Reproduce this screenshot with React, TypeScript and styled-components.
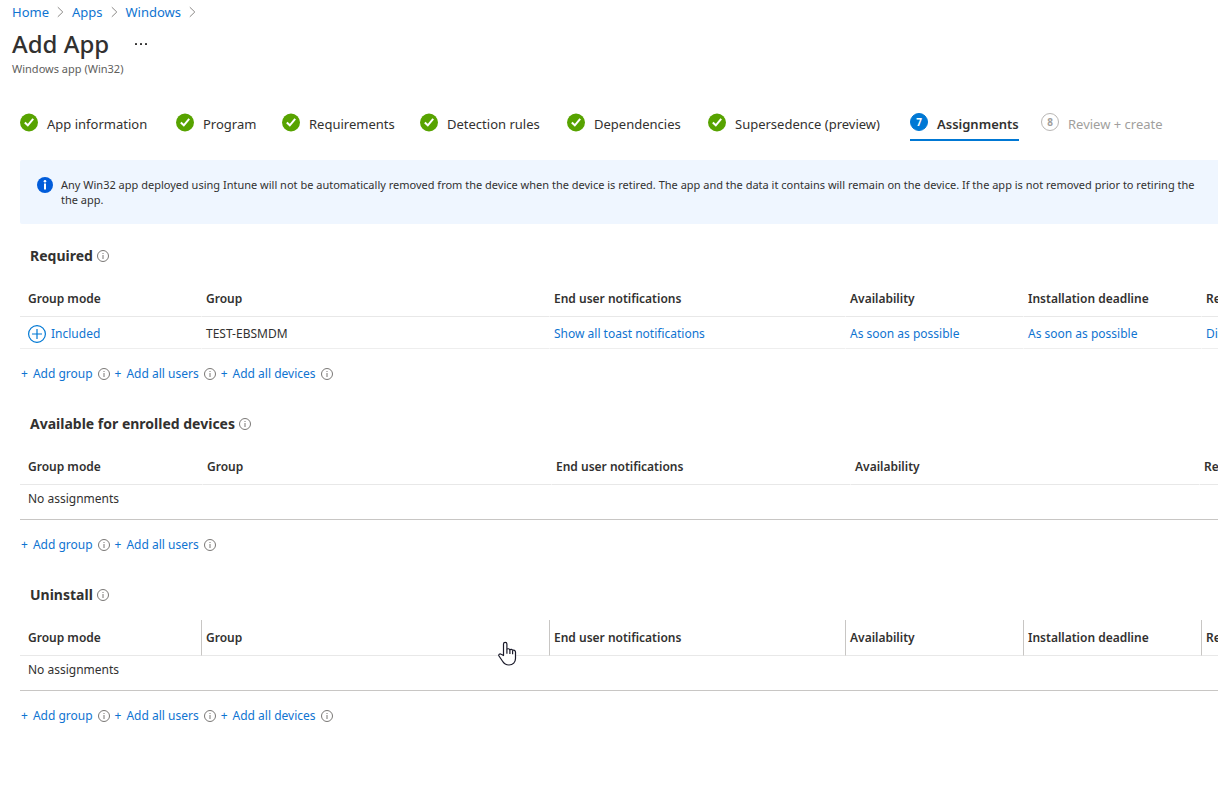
import React from "react";
import styled, { createGlobalStyle } from "styled-components";

const GlobalStyle = createGlobalStyle`
  *, *::before, *::after { box-sizing: border-box; }
  body {
    margin: 0;
    background: #fff;
    color: #323130;
    font-family: "Segoe UI", "Noto Sans", "Open Sans", sans-serif;
    font-size: 12px;
    line-height: 20px;
  }
`;

const BLUE = "#0f74d1";

const Page = styled.div`
  position: relative;
  min-height: 100vh;
  overflow: hidden;
  padding-top: 2px;
`;

const Breadcrumb = styled.nav`
  display: flex;
  align-items: center;
  gap: 8px;
  padding-left: 12px;
  font-size: 13px;
`;

const Link = styled.a`
  color: ${BLUE};
  text-decoration: none;
`;

const Header = styled.header`
  padding: 6px 12px 0;
`;

const TitleRow = styled.div`
  display: flex;
  align-items: center;
  gap: 24px;
`;

const Title = styled.h1`
  margin: 0;
  font-size: 24px;
  font-weight: 500;
  line-height: 32px;
`;

const MoreButton = styled.button`
  display: flex;
  padding: 2px;
  border: 0;
  background: none;
  color: #323130;
`;

const Subtitle = styled.p`
  margin: 0;
  font-size: 11px;
  line-height: 18px;
  color: #605e5c;
`;

const Steps = styled.ol`
  display: grid;
  grid-template-columns: 156px 106px 138px 147px 141px 202px 131px auto;
  justify-content: start;
  margin: 35px 0 0;
  padding: 0 0 0 20px;
  list-style: none;
  white-space: nowrap;
`;

const Step = styled.li<{ $state: "done" | "current" | "upcoming" }>`
  display: flex;
  justify-self: start;
  align-items: flex-start;
  gap: 9px;
  height: 28px;
  font-size: 13px;
  line-height: 22px;
  font-weight: ${(p) => (p.$state === "current" ? 600 : 400)};
  color: ${(p) => (p.$state === "upcoming" ? "#a19f9d" : "#323130")};
  border-bottom: 2px solid ${(p) => (p.$state === "current" ? "#0078d4" : "transparent")};
`;

const StepNumber = styled.span<{ $current: boolean }>`
  width: 18px;
  height: 18px;
  border-radius: 50%;
  border: 1px solid ${(p) => (p.$current ? "#0078d4" : "#b8b6b4")};
  background: ${(p) => (p.$current ? "#0078d4" : "#fff")};
  color: ${(p) => (p.$current ? "#fff" : "#a19f9d")};
  font-size: 10px;
  font-weight: 700;
  line-height: 16px;
  text-align: center;
`;

const Banner = styled.div`
  display: flex;
  align-items: flex-start;
  gap: 8px;
  height: 64px;
  margin: 19px 0 0 20px;
  padding: 17px 0 0 17px;
  border-radius: 2px 0 0 2px;
  background: #eff6ff;
`;

const BannerText = styled.p`
  margin: 0;
  font-size: 11px;
  line-height: 15px;
  white-space: nowrap;
`;

const Section = styled.section`
  padding-left: 20px;

  & + & { margin-top: 30px; }
  ${Banner} + & { margin-top: 22px; }
`;

const Heading = styled.h2`
  display: flex;
  align-items: center;
  gap: 4px;
  margin: 0 0 15px 10px;
  font-size: 14px;
  font-weight: 700;
  line-height: 20px;
`;

const Table = styled.table`
  width: 100%;
  min-width: 1360px;
  table-layout: fixed;
  border-collapse: separate;
  border-spacing: 0;
  text-align: left;
  white-space: nowrap;
`;

const Th = styled.th<{ $divided?: boolean }>`
  height: 36px;
  padding: 0 4px;
  border-left: 1px solid ${(p) => (p.$divided ? "#c8c6c4" : "transparent")};
  border-bottom: 1px solid #e8e8e8;
  font-weight: 600;

  &:first-child { padding-left: 8px; border-left: 0; }
`;

const Td = styled.td<{ $empty?: boolean }>`
  height: ${(p) => (p.$empty ? 35 : 32)}px;
  padding: ${(p) => (p.$empty ? "0 4px 7px" : "2px 4px 0")};
  border-left: 1px solid transparent;
  border-bottom: 1px solid ${(p) => (p.$empty ? "#c8c6c4" : "#eeeeee")};

  &:first-child { padding-left: 8px; border-left: 0; }
`;

const ModeLink = styled(Link)`
  display: flex;
  align-items: center;
  gap: 5px;
`;

const Actions = styled.div`
  display: flex;
  align-items: center;
  gap: 5px;
  margin-top: 15px;
  padding-left: 1px;
`;

const Action = styled.span`
  display: flex;
  align-items: center;
  gap: 5px;
`;

const AddButton = styled.button`
  display: flex;
  gap: 5px;
  padding: 0;
  border: 0;
  background: none;
  color: ${BLUE};
  font: inherit;
`;

const Pointer = styled.svg`
  position: absolute;
  left: 498px;
  top: 641px;
`;

const Chevron = () => (
  <svg width="7" height="12" viewBox="0 0 7 12" fill="none" stroke="#8a8886" aria-hidden="true">
    <path d="M0.8 1.2 5.8 6 0.8 10.8" />
  </svg>
);

const Check = () => (
  <svg width="18" height="19" viewBox="0 0 18 19" aria-hidden="true">
    <circle cx="9" cy="9.5" r="9" fill="#57a300" />
    <path d="M4.800 9.500 7.800 12.300 13.200 5.800" fill="none" stroke="#fff" strokeWidth="2" />
  </svg>
);

const Info = () => (
  <svg width="12" height="12" viewBox="0 0 12 12" aria-hidden="true">
    <circle cx="6" cy="6" r="5.5" fill="none" stroke="#797775" />
    <path d="M6 5v4M6 3v1" stroke="#797775" />
  </svg>
);

const InfoFilled = () => (
  <svg width="16" height="16" viewBox="0 0 16 16" aria-hidden="true">
    <circle cx="8" cy="8" r="8" fill="#015cda" />
    <path d="M8 6.6v6" stroke="#fff" strokeWidth="2" />
    <circle cx="8" cy="4.2" r="1.3" fill="#fff" />
  </svg>
);

const PlusCircle = () => (
  <svg width="18" height="18" viewBox="0 0 18 18" fill="none" stroke="#0078d4" aria-hidden="true">
    <circle cx="9" cy="9" r="8.4" strokeWidth="1.2" />
    <path d="M9 4v10M4 9h10" strokeWidth="1.2" />
  </svg>
);

const doneSteps = [
  "App information",
  "Program",
  "Requirements",
  "Detection rules",
  "Dependencies",
  "Supersedence (preview)",
];

type Column = { label: string; width?: number };

const fullColumns: Column[] = [
  { label: "Group mode", width: 181 },
  { label: "Group", width: 348 },
  { label: "End user notifications", width: 296 },
  { label: "Availability", width: 178 },
  { label: "Installation deadline", width: 178 },
  { label: "Restart grace period" },
];

const availableColumns: Column[] = [
  { label: "Group mode", width: 182 },
  { label: "Group", width: 349 },
  { label: "End user notifications", width: 299 },
  { label: "Availability", width: 349 },
  { label: "Restart grace period" },
];

type AssignmentsProps = {
  title: string;
  columns: Column[];
  actions: string[];
  divided?: boolean;
  children?: React.ReactNode;
};

const Assignments = ({ title, columns, actions, divided, children }: AssignmentsProps) => (
  <Section>
    <Heading>
      {title}
      <Info />
    </Heading>
    <Table aria-label={title}>
      <colgroup>
        {columns.map((c) => (
          <col key={c.label} width={c.width} />
        ))}
      </colgroup>
      <thead>
        <tr>
          {columns.map((c) => (
            <Th key={c.label} scope="col" $divided={divided}>
              {c.label}
            </Th>
          ))}
        </tr>
      </thead>
      <tbody>
        {children ?? (
          <tr>
            <Td $empty colSpan={columns.length}>
              No assignments
            </Td>
          </tr>
        )}
      </tbody>
    </Table>
    <Actions>
      {actions.map((a) => (
        <Action key={a}>
          <AddButton type="button">
            <span>+</span>
            <span>{a}</span>
          </AddButton>
          <Info />
        </Action>
      ))}
    </Actions>
  </Section>
);

export default function App() {
  return (
    <Page>
      <GlobalStyle />
      <Breadcrumb aria-label="Breadcrumb">
        {["Home", "Apps", "Windows"].map((name) => (
          <React.Fragment key={name}>
            <Link href="#">{name}</Link>
            <Chevron />
          </React.Fragment>
        ))}
      </Breadcrumb>
      <Header>
        <TitleRow>
          <Title>Add App</Title>
          <MoreButton type="button" aria-label="More">
            <svg width="12" height="4" viewBox="0 0 12 4" fill="currentColor" aria-hidden="true">
              <rect x="0" y="1" width="2" height="2" rx="0.6" />
              <rect x="5" y="1" width="2" height="2" rx="0.6" />
              <rect x="10" y="1" width="2" height="2" rx="0.6" />
            </svg>
          </MoreButton>
        </TitleRow>
        <Subtitle>Windows app (Win32)</Subtitle>
      </Header>
      <main>
        <Steps>
          {doneSteps.map((s) => (
            <Step key={s} $state="done">
              <Check />
              {s}
            </Step>
          ))}
          <Step $state="current" aria-current="step">
            <StepNumber $current>7</StepNumber>
            Assignments
          </Step>
          <Step $state="upcoming">
            <StepNumber $current={false}>8</StepNumber>
            Review + create
          </Step>
        </Steps>
        <Banner role="note">
          <InfoFilled />
          <BannerText>
            Any Win32 app deployed using Intune will not be automatically removed from the device
            when the device is retired. The app and the data it contains will remain on the device.
            If the app is not removed prior to retiring the
            <br />
            the app.
          </BannerText>
        </Banner>
        <Assignments
          title="Required"
          columns={fullColumns}
          actions={["Add group", "Add all users", "Add all devices"]}
        >
          <tr>
            <Td>
              <ModeLink href="#">
                <PlusCircle />
                Included
              </ModeLink>
            </Td>
            <Td>TEST-EBSMDM</Td>
            <Td>
              <Link href="#">Show all toast notifications</Link>
            </Td>
            <Td>
              <Link href="#">As soon as possible</Link>
            </Td>
            <Td>
              <Link href="#">As soon as possible</Link>
            </Td>
            <Td>
              <Link href="#">Disabled</Link>
            </Td>
          </tr>
        </Assignments>
        <Assignments
          title="Available for enrolled devices"
          columns={availableColumns}
          actions={["Add group", "Add all users"]}
        />
        <Assignments
          title="Uninstall"
          columns={fullColumns}
          actions={["Add group", "Add all users", "Add all devices"]}
          divided
        />
      </main>
      <Pointer width="19" height="25" viewBox="0 0 19 25" aria-hidden="true">
        <path
          d="M5.5 14.5V3a1.7 1.7 0 0 1 3.4 0v5.2c.6-.7 2.6-.6 3 .5.7-.6 2.4-.4 2.7.6 1-.5 2.9 0 2.9 1.8v6.4c0 3.6-2.5 6.5-6.5 6.5-3.4 0-5.2-1.6-6.6-4L1 15c-.8-1.5.8-2.7 2.2-1.7z"
          fill="#fff"
          stroke="#1a1a2a"
          strokeWidth="1.2"
          strokeLinejoin="round"
        />
        <path d="M8.9 8.2v4.6M11.9 8.8v4.2M14.6 9.5v3.8" stroke="#1a1a2a" strokeWidth="1.2" />
      </Pointer>
    </Page>
  );
}
